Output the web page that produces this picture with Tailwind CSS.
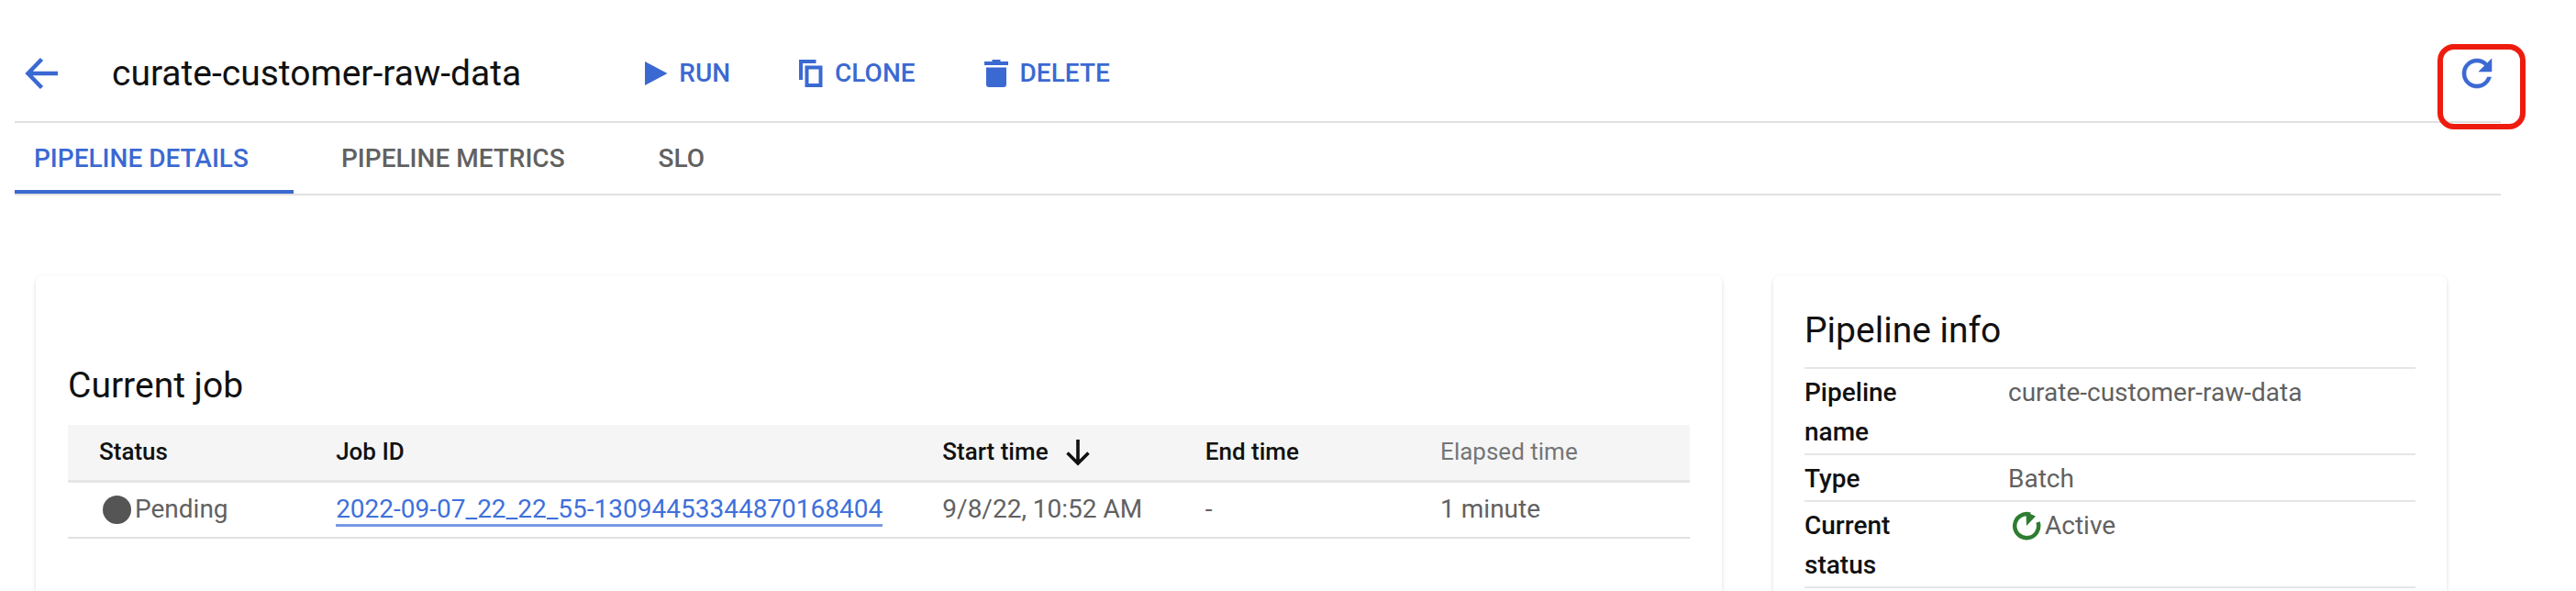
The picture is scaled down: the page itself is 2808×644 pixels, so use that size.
<!DOCTYPE html>
<html lang="en">
<head>
<meta charset="utf-8">
<meta name="viewport" content="width=device-width, initial-scale=1">
<title>curate-customer-raw-data</title>
<script src="https://cdn.jsdelivr.net/npm/@tailwindcss/browser@4"></script>
</head>
<body class="flex min-h-screen flex-col bg-white font-['Roboto',sans-serif] text-[28px] text-[#616161]">
  <header class="ml-4 mr-[82px] mt-7 flex h-[106px] items-center border-b-2 border-[#e0e0e0] font-medium text-[#3b69d2]">
    <button type="button" aria-label="Back" class="ml-2.5 shrink-0">
      <svg class="size-10" viewBox="0 0 40 40" fill="none" stroke="currentColor" stroke-width="4.500"><path d="M37 20H4.500M19.500 4.500L4.500 20l15 15.500"/></svg>
    </button>
    <h1 class="ml-14 text-[39px] font-normal text-[#111]">curate-customer-raw-data</h1>
    <nav aria-label="Actions" class="ml-[132px] flex items-center gap-[74px]">
      <button type="button" class="flex items-center gap-3">
        <svg class="h-8 w-7" viewBox="0 0 28 32" fill="currentColor"><path d="M3 3l24.500 13L3 29z"/></svg>RUN
      </button>
      <button type="button" class="flex items-center gap-3">
        <svg class="h-8 w-7" viewBox="0 0 28 32" fill="none" stroke="currentColor" stroke-width="4"><path d="M3 23V3h16.500"/><path d="M9.500 9.500h15v19.500h-15z"/></svg>CLONE
      </button>
      <button type="button" class="flex items-center gap-3">
        <svg class="h-8 w-7" viewBox="0 0 28 32" fill="currentColor"><path d="M9.500 1h9v2h8.500v4H1V3h8.500zM3 9.500h22V28a3 3 0 0 1-3 3H6a3 3 0 0 1-3-3z"/></svg>DELETE
      </button>
    </nav>
    <div class="relative ml-auto mr-0.5 shrink-0">
      <button type="button" aria-label="Refresh" class="block">
        <svg class="size-12" viewBox="0 0 24 24" fill="currentColor" stroke="currentColor" stroke-width="0.300"><path d="M17.650 6.350C16.200 4.900 14.210 4 12 4c-4.420 0-7.990 3.580-7.990 8s3.570 8 7.990 8c3.730 0 6.840-2.550 7.730-6h-2.080c-.82 2.330-3.040 4-5.650 4-3.310 0-6-2.690-6-6s2.690-6 6-6c1.660 0 3.140.69 4.220 1.780L13 11h7V4l-2.350 2.350z"/></svg>
      </button>
      <div class="pointer-events-none absolute -left-[19px] -top-2 h-[93px] w-24 rounded-[18px] border-6 border-[#ee1c0e]"></div>
    </div>
  </header>

  <nav aria-label="Pipeline sections" class="ml-4 mr-[82px] flex h-[79px] border-b-2 border-[#e0e0e0] font-medium">
    <a href="#details" aria-current="page" class="flex w-[304px] items-center border-b-4 border-[#3b69d2] pl-[21px] pt-1 text-[#3b69d2]">PIPELINE DETAILS</a>
    <a href="#metrics" class="flex items-center px-[52px]">PIPELINE METRICS</a>
    <a href="#slo" class="flex items-center px-[50px]">SLO</a>
  </nav>

  <main class="ml-[39px] mr-[141px] mt-[87px] grid flex-1 grid-cols-[1838fr_734fr] gap-14">
    <section class="rounded-t-lg px-[35px] pt-24 shadow-[0_2px_5px_rgba(0,0,0,0.14)]">
      <h2 class="text-[39px] leading-12 text-[#111]">Current job</h2>
      <table class="mt-[19px] w-full table-fixed text-left">
        <thead class="bg-[#f5f5f5] text-[26px] text-[#111]">
          <tr class="h-[61px] border-b-3 border-[#e6e6e6]">
            <th scope="col" class="w-[14.6%] pl-[34px] font-medium">Status</th>
            <th scope="col" class="w-[37.4%] pl-[34px] font-medium">Job ID</th>
            <th scope="col" aria-sort="descending" class="w-[16.2%] pl-[34px] font-medium">
              <button type="button" class="flex items-center gap-[18px]">Start time
                <svg class="h-8 w-7" viewBox="0 0 28 32" fill="none" stroke="currentColor" stroke-width="3.600"><path d="M14 2v26M2.500 16.500L14 28 25.500 16.500"/></svg>
              </button>
            </th>
            <th scope="col" class="w-[14.5%] pl-[34px] font-medium">End time</th>
            <th scope="col" class="pl-[34px] font-normal text-[#757575]">Elapsed time</th>
          </tr>
        </thead>
        <tbody>
          <tr class="h-[62px] border-b-2 border-[#e0e0e0]">
            <td class="pl-[34px]"><span class="flex items-center gap-1 pl-1"><span class="size-[31px] rounded-full bg-[#555]"></span>Pending</span></td>
            <td class="pl-[34px]"><a href="#job" class="border-b-3 border-[#7899e3] text-[#3f70da]">2022-09-07_22_22_55-13094453344870168404</a></td>
            <td class="pl-[34px]">9/8/22, 10:52 AM</td>
            <td class="pl-[34px]">-</td>
            <td class="pl-[34px]">1 minute</td>
          </tr>
        </tbody>
      </table>
    </section>

    <section class="rounded-t-lg px-[34px] pt-9 shadow-[0_2px_5px_rgba(0,0,0,0.14)]">
      <h2 class="text-[39px] leading-12 text-[#111]">Pipeline info</h2>
      <table class="mt-4 w-full table-fixed border-t-2 border-[#e6e6e6] text-left leading-[43px]">
        <tbody class="align-top">
          <tr class="border-b-2 border-[#e6e6e6]">
            <th scope="row" class="w-1/3 pb-0.5 pt-1 pr-20 font-medium text-[#111]">Pipeline name</th>
            <td class="pb-0.5 pt-1">curate-customer-raw-data</td>
          </tr>
          <tr class="border-b-2 border-[#e6e6e6]">
            <th scope="row" class="pb-0.5 pt-1 font-medium text-[#111]">Type</th>
            <td class="pb-0.5 pt-1">Batch</td>
          </tr>
          <tr class="border-b-2 border-[#e6e6e6]">
            <th scope="row" class="pb-0.5 pt-1 pr-20 font-medium text-[#111]">Current status</th>
            <td class="pb-0.5 pt-1"><span class="flex items-center gap-1 pl-1"><svg class="size-8" viewBox="0 0 32 32" fill="none"><path d="M20 3.700A13 13 0 1 0 28.500 12" stroke="#2e7d32" stroke-width="4.500"/><path d="M15.500 1L26 5.500 16 16z" fill="#2e7d32"/></svg>Active</span></td>
          </tr>
        </tbody>
      </table>
    </section>
  </main>
</body>
</html>
